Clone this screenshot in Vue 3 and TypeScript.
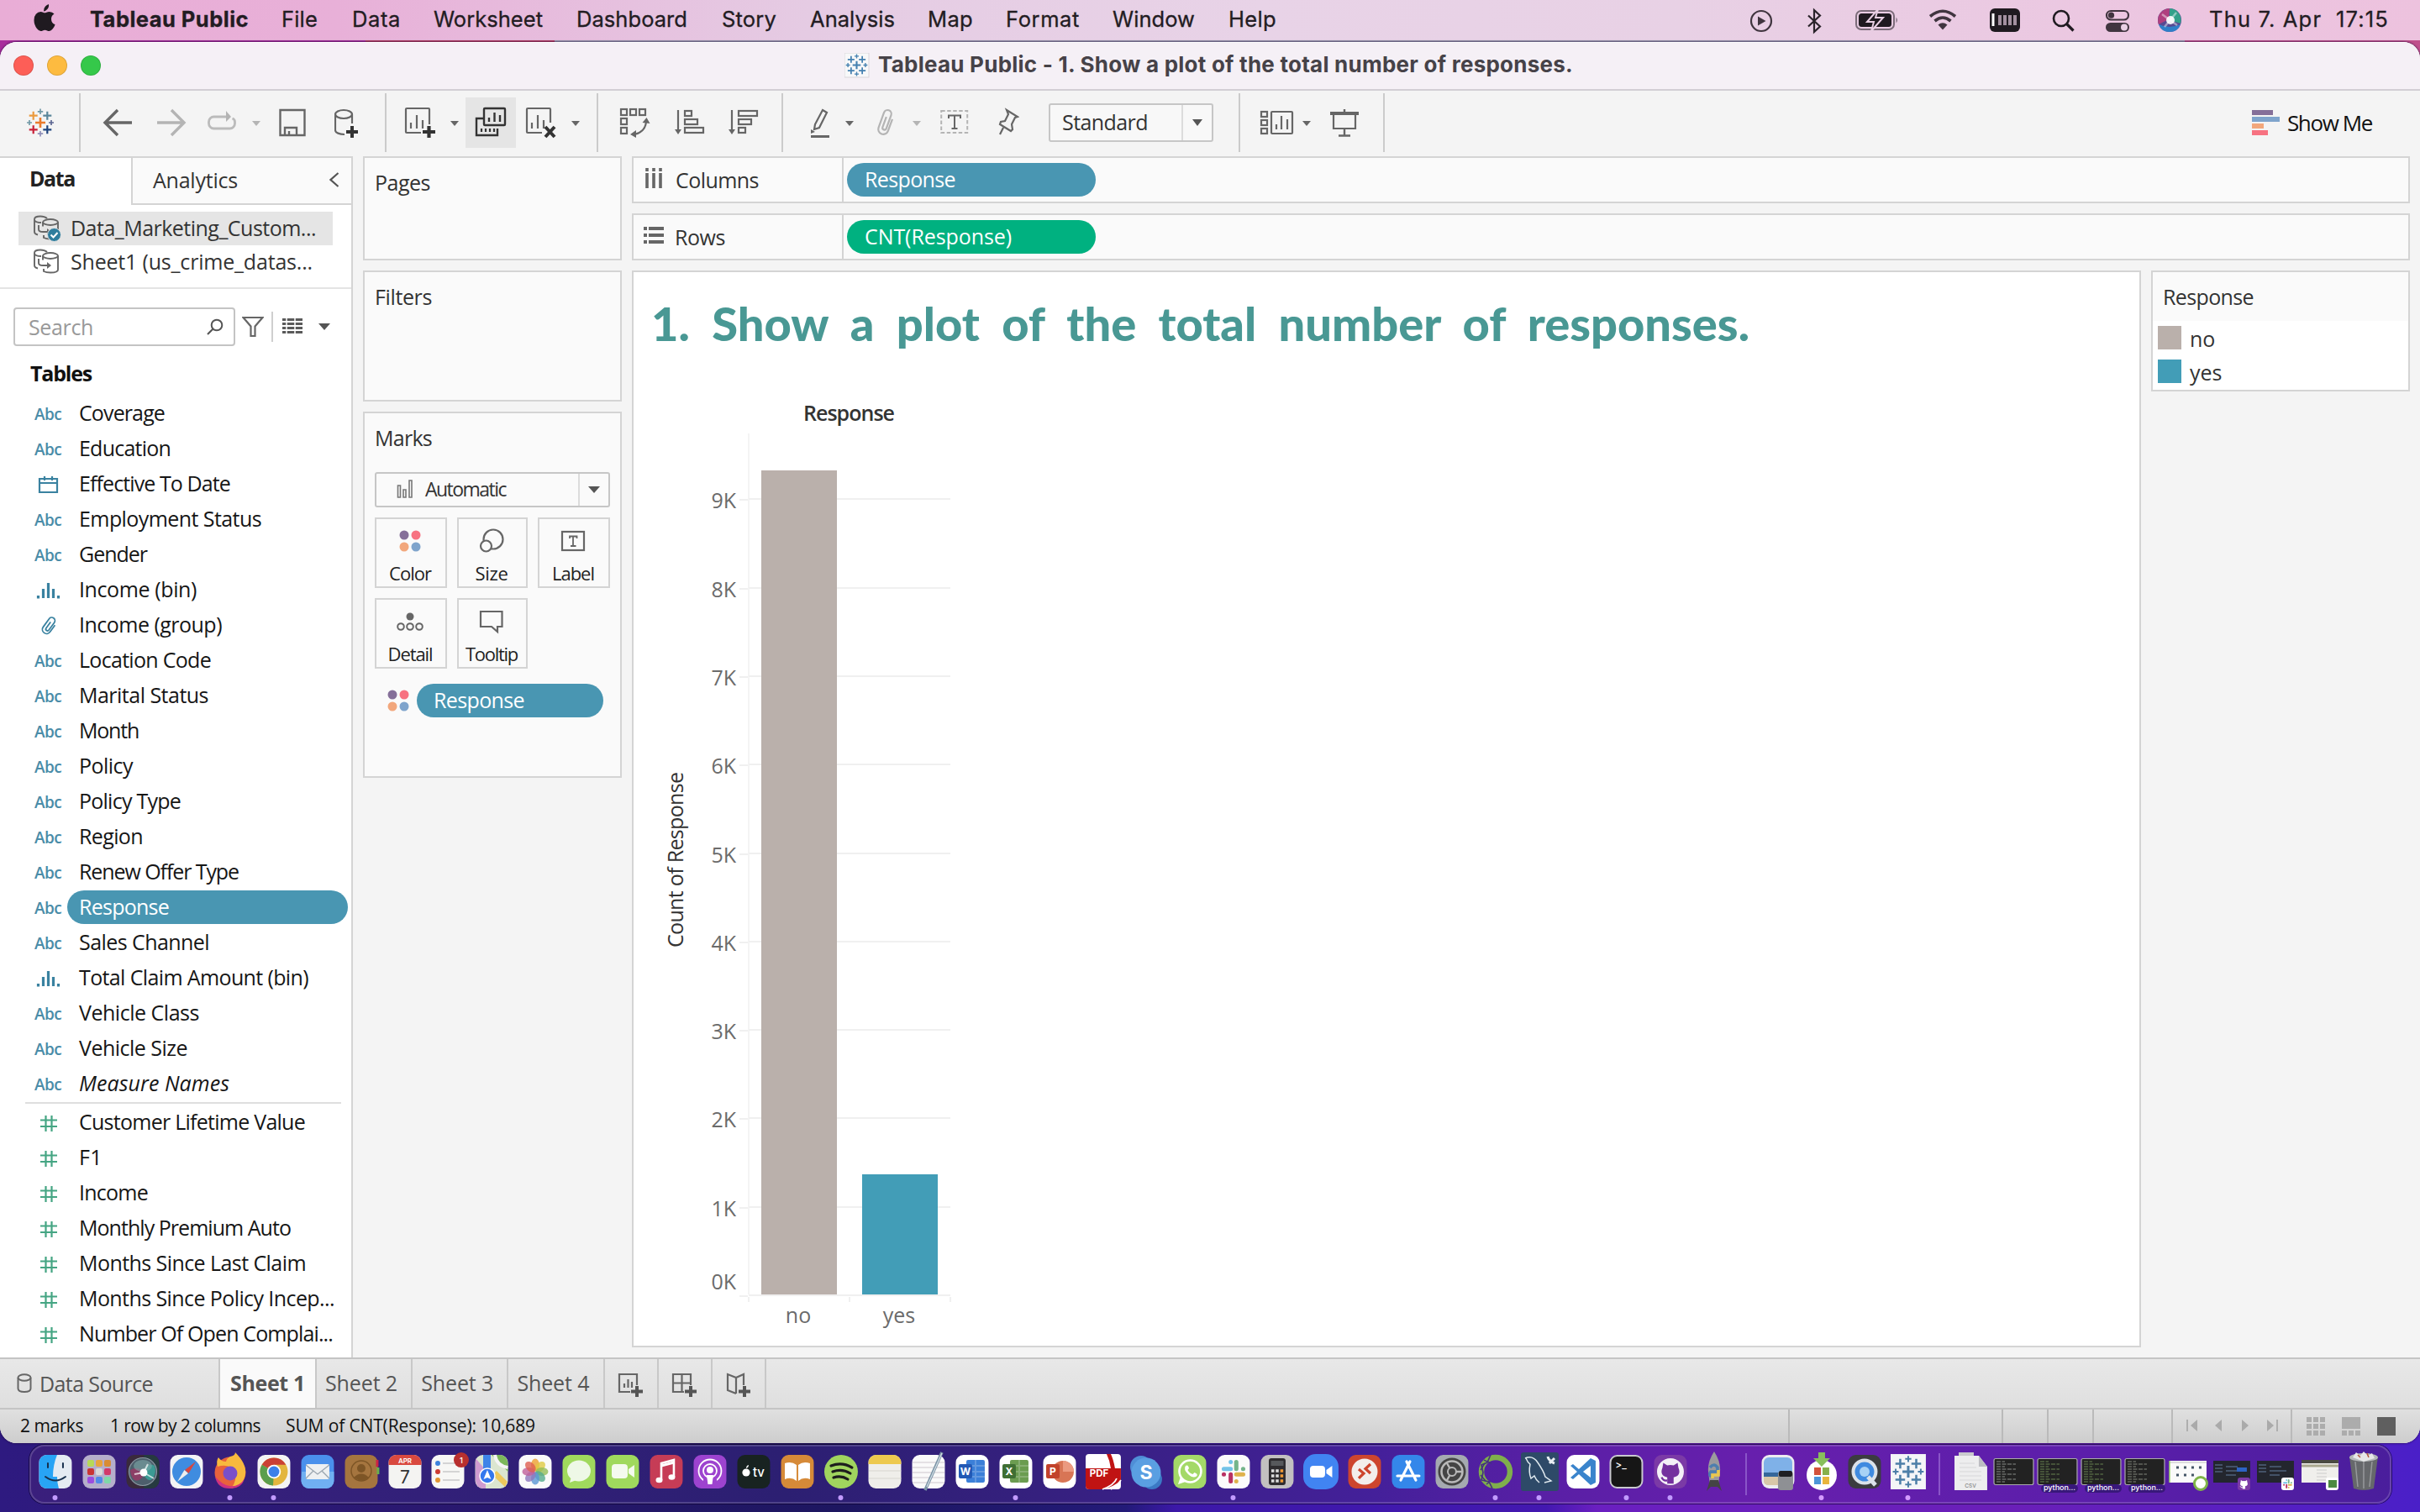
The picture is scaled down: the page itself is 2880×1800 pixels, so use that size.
<script setup lang="ts">
import type { Directive } from 'vue'

interface Field { name: string; kind: string; w: number; italic?: boolean }
interface Tool { x: number; w: number; svg?: string; sep?: boolean; active?: boolean; select?: boolean }
interface Menu { label: string; x: number; w: number }
interface App { svg: string; run?: boolean }

/* Tracks a label so that its advance equals the measured design width. */
const vFit: Directive<HTMLElement, number> = {
  mounted(el, binding) {
    const count = (el.textContent ?? '').length
    const natural = el.getBoundingClientRect().width
    if (count > 1 && binding.value) {
      el.style.letterSpacing = `${((binding.value + 2 - natural) / count).toFixed(3)}px`
    }
  },
}

const menus: Menu[] = [
  { label: 'Tableau Public', x: 107, w: 187 },
  { label: 'File', x: 335, w: 41 },
  { label: 'Data', x: 419, w: 56 },
  { label: 'Worksheet', x: 516, w: 128 },
  { label: 'Dashboard', x: 686, w: 130 },
  { label: 'Story', x: 859, w: 63 },
  { label: 'Analysis', x: 964, w: 99 },
  { label: 'Map', x: 1104, w: 52 },
  { label: 'Format', x: 1197, w: 86 },
  { label: 'Window', x: 1324, w: 96 },
  { label: 'Help', x: 1462, w: 55 },
]
const menuWidth = (i: number) => (i + 1 < menus.length ? menus[i + 1].x : 1560) - menus[i].x

const plus = (x: number, y: number, r: number, c: string, s: number) =>
  `<path d="M${x - r} ${y}h${2 * r}M${x} ${y - r}v${2 * r}" stroke="${c}" stroke-width="${s}" fill="none"/>`
const logo = (cx: number, cy: number, k: number, cs: string[]) =>
  plus(cx, cy, 6 * k, cs[0], 2.6 * k) +
  plus(cx - 8.3 * k, cy - 8.3 * k, 5 * k, cs[1], 2.2 * k) + plus(cx + 8.3 * k, cy - 8.3 * k, 5 * k, cs[2], 2.2 * k) +
  plus(cx - 8.3 * k, cy + 8.3 * k, 5 * k, cs[3], 2.2 * k) + plus(cx + 8.3 * k, cy + 8.3 * k, 5 * k, cs[4], 2.2 * k) +
  plus(cx, cy - 13.2 * k, 3.2 * k, cs[5], 1.7 * k) + plus(cx - 13 * k, cy, 3 * k, cs[6], 1.7 * k) +
  plus(cx + 13 * k, cy, 3 * k, cs[7], 1.7 * k) + plus(cx, cy + 13.2 * k, 3.2 * k, cs[8], 1.7 * k)
const mono = (c: string) => Array(9).fill(c) as string[]

const G = '#666'
const caret = (c = '#666') => `<path d="M0 18h10l-5 6z" fill="${c}"/>`
const bars = (x: number, y: number, c = G) =>
  `<path d="M${x} ${y}v-7M${x + 7} ${y}v-16M${x + 14} ${y}v-10" stroke="${c}" stroke-width="2.2" fill="none"/>`

const tools: Tool[] = [
  { x: 32, w: 32, svg: logo(16, 20, 1, ['#eb7b2d', '#eb9a3d', '#5b879b', '#c72037', '#1f447e', '#7199a6', '#7199a6', '#5c6692', '#8f8fb8']) },
  { x: 94, w: 2, sep: true },
  { x: 122, w: 36, svg: `<path d="M18 5 3 20l15 15M3 20h32" fill="none" stroke="${G}" stroke-width="3.4"/>` },
  { x: 186, w: 36, svg: '<path d="M18 5l15 15-15 15M1 20h32" fill="none" stroke="#b4b4b4" stroke-width="3.4"/>' },
  { x: 246, w: 36, svg: '<path d="M24 13H8.500a6 6 0 0 0-6 6v2a6 6 0 0 0 6 6h19a6 6 0 0 0 6-6v-2q0-3-3-4" fill="none" stroke="#bbb" stroke-width="2.800"/><path d="M23 6v13l6-6z" fill="#b4b4b4"/>' },
  { x: 300, w: 10, svg: caret('#b4b4b4') },
  { x: 332, w: 32, svg: `<path d="M1.500 5h29v30h-29zM7 35v-9h14v9M12 35v-5" fill="none" stroke="${G}" stroke-width="2.400"/>` },
  { x: 398, w: 30, svg: `<ellipse cx="11" cy="10" rx="10" ry="5" fill="none" stroke="${G}" stroke-width="2.200"/><path d="M1 10v19c0 3 5 5 11 5M21 10v11" fill="none" stroke="${G}" stroke-width="2.200"/><path d="M14 31h14M21 24v14" stroke="#333" stroke-width="4"/>` },
  { x: 458, w: 2, sep: true },
  { x: 481, w: 37, svg: `<path d="M20 32H3a1 1 0 0 1-1-1V4a1 1 0 0 1 1-1h26a1 1 0 0 1 1 1v18" fill="none" stroke="${G}" stroke-width="2.200"/>${bars(8, 27)}<path d="M22 31h15M29.500 24v14" stroke="#333" stroke-width="4.200"/>` },
  { x: 536, w: 10, svg: caret() },
  { x: 554, w: 60, active: true, svg: '<rect x="22" y="3" width="25" height="20" fill="none" stroke="#333" stroke-width="2.400" rx="1"/><path d="M28 19v-5M34.500 19V8M41 19v-8M22 15h-9v20h25v-8" fill="none" stroke="#333" stroke-width="2.400"/><path d="M19 27v4M24 27v4M29 27v4M34 27v4" stroke="#333" stroke-width="2.200"/>' },
  { x: 625, w: 37, svg: `<path d="M20 32H3a1 1 0 0 1-1-1V4a1 1 0 0 1 1-1h26a1 1 0 0 1 1 1v16" fill="none" stroke="${G}" stroke-width="2.200"/>${bars(8, 27)}<path d="M24 25l11 12M35 25L24 37" stroke="#333" stroke-width="4"/>` },
  { x: 680, w: 10, svg: caret() },
  { x: 710, w: 2, sep: true },
  { x: 737, w: 37, svg: `<g fill="none" stroke="${G}" stroke-width="2.200"><rect x="2" y="4" width="7" height="7"/><rect x="13" y="4" width="7" height="7"/><rect x="24" y="4" width="7" height="7"/><rect x="2" y="15" width="7" height="7"/><rect x="2" y="26" width="7" height="7"/><path d="M32 19q-1 12-14 15"/></g><path d="M27.500 20l5-6 4 7zM20 29l-7 5 7 4z" fill="${G}"/>` },
  { x: 802, w: 37, svg: `<g fill="none" stroke="${G}" stroke-width="2.200"><path d="M5 5v24"/><rect x="13" y="6" width="8" height="6"/><rect x="13" y="16" width="15" height="6"/><rect x="13" y="26" width="22" height="6"/></g><path d="M1 28h8l-4 6z" fill="${G}"/>` },
  { x: 866, w: 37, svg: `<g fill="none" stroke="${G}" stroke-width="2.200"><path d="M5 5v24"/><rect x="13" y="6" width="22" height="6"/><rect x="13" y="16" width="15" height="6"/><rect x="13" y="26" width="8" height="6"/></g><path d="M1 28h8l-4 6z" fill="${G}"/>` },
  { x: 930, w: 2, sep: true },
  { x: 963, w: 26, svg: `<path d="M16 5l5 3-9 18-6 2 1-6z" fill="none" stroke="${G}" stroke-width="2.200"/><path d="M2 28l5 3-5 2z" fill="${G}"/><path d="M2 36.500h22" stroke="${G}" stroke-width="3.200"/>` },
  { x: 1006, w: 10, svg: caret() },
  { x: 1040, w: 26, svg: '<path d="M20 13v15a6 6 0 0 1-12 0V9a4.500 4.500 0 0 1 9 0v17a2.300 2.300 0 0 1-4.600 0V13" transform="rotate(20 13 20)" fill="none" stroke="#b4b4b4" stroke-width="2.200"/>' },
  { x: 1086, w: 10, svg: caret('#b4b4b4') },
  { x: 1119, w: 34, svg: `<rect x="1.200" y="6" width="31" height="26" fill="none" stroke="#b4b4b4" stroke-width="2" stroke-dasharray="4.500 2.500"/><path d="M10 15v-3.500h14V15M17 11.500v15M13.500 27h7" fill="none" stroke="${G}" stroke-width="2"/>` },
  { x: 1186, w: 27, svg: `<path d="M12 5l13 8-3 1-4 8 1 6-2 2-13-8 1-3 5-1 4-8zM8 26l-4 8" fill="none" stroke="${G}" stroke-width="2.200"/>` },
  { x: 1248, w: 196, select: true },
  { x: 1474, w: 2, sep: true },
  { x: 1499, w: 41, svg: `<g fill="none" stroke="${G}" stroke-width="2.200"><rect x="2" y="7" width="7" height="6"/><rect x="2" y="17" width="7" height="6"/><rect x="2" y="27" width="7" height="6"/><rect x="14" y="7" width="25" height="26" rx="1"/><path d="M20 28v-6M26 28V12M33 28V16"/></g>` },
  { x: 1550, w: 10, svg: caret() },
  { x: 1583, w: 34, svg: `<path d="M17 4v4M17 27v8M10 35.500h14" stroke="${G}" stroke-width="2.400"/><path d="M0 9h34" stroke="${G}" stroke-width="4"/><path d="M4 10v17h26V10" fill="none" stroke="${G}" stroke-width="2.200"/>` },
  { x: 1646, w: 2, sep: true },
]
const toolGap = (i: number) => tools[i].x - (i ? tools[i - 1].x + tools[i - 1].w : 0)

const dims: Field[] = [
  { name: 'Coverage', kind: 'abc', w: 100 },
  { name: 'Education', kind: 'abc', w: 107 },
  { name: 'Effective To Date', kind: 'date', w: 178 },
  { name: 'Employment Status', kind: 'abc', w: 215 },
  { name: 'Gender', kind: 'abc', w: 79 },
  { name: 'Income (bin)', kind: 'bin', w: 138 },
  { name: 'Income (group)', kind: 'group', w: 168 },
  { name: 'Location Code', kind: 'abc', w: 155 },
  { name: 'Marital Status', kind: 'abc', w: 152 },
  { name: 'Month', kind: 'abc', w: 69 },
  { name: 'Policy', kind: 'abc', w: 62 },
  { name: 'Policy Type', kind: 'abc', w: 119 },
  { name: 'Region', kind: 'abc', w: 74 },
  { name: 'Renew Offer Type', kind: 'abc', w: 188 },
  { name: 'Response', kind: 'abc', w: 105 },
  { name: 'Sales Channel', kind: 'abc', w: 153 },
  { name: 'Total Claim Amount (bin)', kind: 'bin', w: 271 },
  { name: 'Vehicle Class', kind: 'abc', w: 141 },
  { name: 'Vehicle Size', kind: 'abc', w: 127 },
  { name: 'Measure Names', kind: 'abc', w: 177, italic: true },
]
const measures: Field[] = [
  { name: 'Customer Lifetime Value', kind: 'num', w: 267 },
  { name: 'F1', kind: 'num', w: 26 },
  { name: 'Income', kind: 'num', w: 80 },
  { name: 'Monthly Premium Auto', kind: 'num', w: 250 },
  { name: 'Months Since Last Claim', kind: 'num', w: 268 },
  { name: 'Months Since Policy Incep...', kind: 'num', w: 302 },
  { name: 'Number Of Open Complai...', kind: 'num', w: 300 },
]

const B = '#3a82a0'
const kindIcons: Record<string, string> = {
  date: `<path d="M5 7h21v16H5zM5 12h21M11 4v5M20 4v5" fill="none" stroke="${B}" stroke-width="2.200"/>`,
  bin: `<path d="M3.500 20v3.600M9.500 12v11M15.500 5v18M21.500 12v11M27.500 20v3.600" stroke="${B}" stroke-width="3.200" fill="none"/>`,
  group: `<path d="M21.500 9v10a5 5 0 0 1-10 0V7a3.800 3.800 0 0 1 7.600 0v11a2 2 0 0 1-4 0V9" transform="rotate(36 16 14)" fill="none" stroke="${B}" stroke-width="1.800"/>`,
  num: '<path d="M6 10.500h20M6 18h20M12.500 5v19M19.500 5v19" fill="none" stroke="#45a583" stroke-width="2.200"/>',
}

const cards = [
  { label: 'Color', w: 48, icon: '<circle cx="9" cy="10" r="5.500" fill="#856f99"/><circle cx="23" cy="10" r="5.500" fill="#f77281"/><circle cx="9" cy="24" r="5.500" fill="#f2a77c"/><circle cx="23" cy="24" r="5.500" fill="#7fa4cc"/>' },
  { label: 'Size', w: 37, icon: `<circle cx="18" cy="15" r="11.500" fill="none" stroke="${G}" stroke-width="2.200"/><circle cx="9.500" cy="23" r="6.500" fill="#fafafa" stroke="${G}" stroke-width="2.200"/>` },
  { label: 'Label', w: 48, icon: `<rect x="3" y="6" width="26" height="22" fill="none" stroke="${G}" stroke-width="2.200"/><path d="M12 14v-2.500h8.500V14M16 12v10.500M13 23h6.500" fill="none" stroke="${G}" stroke-width="1.800"/>` },
  { label: 'Detail', w: 51, icon: `<circle cx="16" cy="11" r="4.500" fill="${G}"/><g fill="none" stroke="${G}" stroke-width="2"><circle cx="5" cy="23" r="3.800"/><circle cx="16" cy="23" r="3.800"/><circle cx="27" cy="23" r="3.800"/></g>` },
  { label: 'Tooltip', w: 60, icon: `<path d="M3 5h25.500v18H23v6l-7-6H3z" fill="none" stroke="${G}" stroke-width="2.200"/>` },
]
const dots = cards[0].icon

const ticks = [0, 1, 2, 3, 4, 5, 6, 7, 8, 9].map((n) => ({
  label: `${n}K`,
  y: Math.round(1542 - n * 105.3),
  base: n === 0 ? 1535 : Math.round(1542 - n * 105.3) + 11,
}))

const tabs = [
  { label: 'Sheet 2', w: 84 },
  { label: 'Sheet 3', w: 84 },
  { label: 'Sheet 4', w: 84 },
]
const P = '<path d="M16 26.500h14M23 20v13" stroke="#555" stroke-width="4"/>'
const newTabs = [
  `<path d="M15 27H2V6h21v13M8 22v-5M12.500 22V12M17 22v-7" fill="none" stroke="${G}" stroke-width="2.200"/>${P}`,
  `<path d="M15 27H2V6h21v13M2 16.500h21M12.500 6v21" fill="none" stroke="${G}" stroke-width="2.200"/>${P}`,
  `<path d="M13 29L3 25V6l10 4 9-4v13M13 10v19" fill="none" stroke="${G}" stroke-width="2.200"/>${P}`,
]

/* Dock icons are drawn on a 52 x 70 canvas. */
const tile = (bg: string, body = '') => `<rect x="6.500" y="12" width="39" height="40" rx="9" fill="${bg}"/>${body}`
const txt = (x: number, y: number, s: number, c: string, t: string, w = 700) =>
  `<text x="${x}" y="${y}" font-family="Inter, sans-serif" font-size="${s}" font-weight="${w}" fill="${c}" text-anchor="middle">${t}</text>`
const code = (c: string) => {
  let d = ''
  for (let i = 0; i < 9; i++) d += `M5 ${20 + i * 3}h${10 + ((i * 13) % 26)}`
  return `<rect x="2" y="16.500" width="47" height="31" rx="2" fill="#222" stroke="#aaa" stroke-width="1.200"/><path d="${d}" stroke="${c}" stroke-width="1" stroke-dasharray="5 1.500"/>`
}
const pyLabel = `<rect x="6" y="47" width="44" height="10" rx="5" fill="#38187a"/>${txt(28, 54.5, 9, '#fff', 'python...', 500)}`
const office = (c: string, d: string, t: string) =>
  tile('#fff', `<rect x="19" y="18" width="22" height="27" rx="2" fill="${c}"/><path d="M19 25h22M19 32h22M19 38h22M30 18v27" stroke="#fff" stroke-opacity=".2" stroke-width="2"/><rect x="10" y="23" width="16" height="17" rx="2" fill="${d}"/>${txt(18, 36, 12, '#fff', t)}`)
const slack = (x: number, y: number, k: number) =>
  `<g transform="translate(${x} ${y}) scale(${k})" stroke-width="4.600" stroke-linecap="round" fill="none"><path d="M-3-10.500v.1M-10.500-3h7.500" stroke="#72c3e8"/><path d="M3-10.500v7.500M10.500-3h-.1" stroke="#74b58a"/><path d="M3 3h7.500M3 10.500v-.1" stroke="#dfb24c"/><path d="M-3 3v7.500M-10.500 3h.1" stroke="#b83264"/></g>`
const cat = (x: number, y: number, k: number, c: string) =>
  `<g transform="translate(${x} ${y}) scale(${k})"><path d="M-9-11l5 3q4-1 8 0l5-3 1 6q4 10-6 12v8h-8v-8q-10-2-6-12z" fill="${c}"/><path d="M-4 11q-5 1-7-4" fill="none" stroke="${c}" stroke-width="2.500"/></g>`
const petals = ['#eda02f', '#e0cb45', '#93bd57', '#55ab8d', '#5b97d4', '#8d78bd', '#c0609a', '#df5f50']
  .map((c, i) => `<ellipse cx="26" cy="24" rx="5" ry="7.500" fill="${c}" fill-opacity=".8" transform="rotate(${i * 45} 26 32)"/>`)
  .join('')
const pads = ['#b6d957', '#e8a33c', '#d98c35', '#c93434', '#d8d8d8', '#d2386a', '#9b4ddf', '#5089e8', '#7fd8a8']
  .map((c, i) => `<rect x="${12 + (i % 3) * 10}" y="${18 + Math.floor(i / 3) * 10}" width="8" height="8" rx="2" fill="${c}"/>`)
  .join('')

const dockMain: App[] = [
  { run: true, svg: '<rect x="6.500" y="12" width="39" height="40" rx="9" fill="#e4ebf2"/><path d="M28 12H15.500a9 9 0 0 0-9 9v22a9 9 0 0 0 9 9H30q-2-7-2-14h-5q0-14 5-26z" fill="#28a4f5"/><path d="M17 22v5M35 22v5M14 38q12 9 24 0" stroke="#17304d" stroke-width="2" fill="none" stroke-linecap="round"/>' },
  { svg: tile('#b5aecb', pads) },
  { svg: tile('#3a2a3c', '<path d="M27 12h9.500a9 9 0 0 1 9 9v22a9 9 0 0 1-9 9H27z" fill="#263a40"/><circle cx="26" cy="32" r="16.500" fill="#4d5f6c" stroke="#8b98a3" stroke-width="1.200"/><path d="M11 30q9-5 17 3-4 12-12 9-5-5-5-12z" fill="#8c3f66"/><path d="M26 33q5-13 14-8 3 9-3 16-6 4-11-8z" fill="#3b9a93"/><ellipse cx="26" cy="25" rx="11" ry="7" fill="#7fa9a9" fill-opacity=".6"/><circle cx="27" cy="33" r="4.500" fill="#fff"/><path d="M27 33l12 7M27 33l-11 2M27 33l5-10" stroke="#fff" stroke-opacity=".7" stroke-width="2"/>') },
  { svg: tile('#f3f3f5', '<circle cx="26" cy="32" r="17" fill="#3f8ce0"/><path d="M37 20L28.500 34 24 30z" fill="#d8463f"/><path d="M15 44l8.500-14 4.500 4z" fill="#eee"/>') },
  { run: true, svg: '<circle cx="26" cy="33" r="18.500" fill="#e8623c"/><path d="M26 14q6-1 6-5 14 14 12 26-2 14-17 17 8-10 4-20-6-10-20-6-2-7 1-11 3 5 9 5 1-4 5-6z" fill="#f8b93e"/><circle cx="26" cy="34" r="8.500" fill="#7a4fc9"/><path d="M8 38q3 15 19 14 12 0 16-11-8 10-18 8-8-1-17-11z" fill="#cf3280"/>' },
  { run: true, svg: tile('#f4f4f4', '<circle cx="26" cy="32" r="16.500" fill="#e3b63e"/><path d="M26 32L11.700 23.700A16.500 16.500 0 0 1 40.300 23.700H26z" fill="#ca4034"/><path d="M26 32l-14.300-8.300A16.500 16.500 0 0 0 25 48.500z" fill="#5b9e4d"/><circle cx="26" cy="32" r="8.300" fill="#fff"/><circle cx="26" cy="32" r="6.500" fill="#3b80e8"/>') },
  { svg: tile('#4a90ec', '<path d="M7 32h38.500v11a9 9 0 0 1-9 9H15.500a9 9 0 0 1-9-9z" fill="#70b0f2"/><rect x="12" y="23" width="28" height="18" rx="2" fill="#eef0f2"/><path d="M12 24l14 11 14-11M12 40l9-9M40 40l-9-9" fill="none" stroke="#9aa5b0" stroke-width="1.300"/>') },
  { svg: tile('#a5753f', '<path d="M45 18v8" stroke="#c24" stroke-width="3"/><path d="M46 27v8" stroke="#6ab04c" stroke-width="3"/><circle cx="26" cy="31" r="12" fill="none" stroke="#7d5526" stroke-width="1.500"/><circle cx="26" cy="28" r="5" fill="#7d5526"/><path d="M17 39q9-9 18 0-8 7-18 0z" fill="#7d5526"/>') },
  { svg: tile('#f4f4f2', `<path d="M6.500 24v-3a9 9 0 0 1 9-9h21a9 9 0 0 1 9 9v3z" fill="#d9493f"/>${txt(26, 21.500, 8, '#fff', 'APR', 600)}${txt(26, 46, 21, '#333', '7', 400)}`) },
  { svg: tile('#f7f7f5', `<path d="M20 22h17M20 32h20M20 42h20" stroke="#c9c9c9" stroke-width="1.500"/><circle cx="14" cy="22" r="3" fill="#3d83dd"/><circle cx="14" cy="32" r="3" fill="#cc3b33"/><circle cx="14" cy="42" r="3" fill="#e29331"/><circle cx="42" cy="18" r="9" fill="#b8302f"/>${txt(42, 21.500, 9.500, '#fff', '1', 500)}`) },
  { svg: tile('#dbe6d0', '<path d="M7 16l12 14v22h-3a9 9 0 0 1-9-9z" fill="#cf9bd0"/><path d="M16 12h9v19h-9z" fill="#3e84e8"/><path d="M26 12l19.500 20v-10a10 10 0 0 0-9-10z" fill="#7cb85b"/><path d="M27 36l15 14 3-6-13-13z" fill="#eec85c"/><path d="M30 12q2 13 15.500 15" fill="none" stroke="#f5f5f5" stroke-width="4"/><circle cx="21" cy="37" r="9" fill="#3478ee" stroke="#fff" stroke-width="1.500"/><path d="M21 30l4.500 11-4.500-2-4.500 2z" fill="#fff"/>') },
  { svg: tile('#fafafa', petals) },
  { svg: tile('#a0d95d', '<ellipse cx="26" cy="31" rx="14" ry="12.500" fill="#eef8e6"/><path d="M17 38l-2 7 8-3z" fill="#eef8e6"/>') },
  { svg: tile('#a0d95d', '<rect x="13" y="23" width="19" height="17" rx="4" fill="#f4faee"/><path d="M33 29l7-5v15l-7-5z" fill="#f4faee"/>') },
  { svg: tile('#c63c56', '<path d="M20 42V22l15-4v20" fill="none" stroke="#fff" stroke-width="2.600"/><path d="M20 25l15-4" stroke="#fff" stroke-width="3"/><ellipse cx="17.500" cy="42" rx="4" ry="3.200" fill="#fff"/><ellipse cx="32.500" cy="38.500" rx="4" ry="3.200" fill="#fff"/>') },
  { svg: tile('#9d43cf', '<circle cx="26" cy="31" r="13.500" fill="none" stroke="#fff" stroke-width="1.800"/><circle cx="26" cy="31" r="8" fill="none" stroke="#fff" stroke-width="1.800"/><path d="M18 50h16v-9H18z" fill="#9d43cf"/><circle cx="26" cy="30" r="4" fill="#fff"/><path d="M22 36h8l-1.500 11h-5z" fill="#fff"/>') },
  { svg: tile('#182321', `<circle cx="17" cy="33" r="4.600" fill="#fff"/><path d="M17 28q0-3 3-4 0 3-3 4z" fill="#fff"/>${txt(32, 38, 15, '#fff', 'tv', 500)}`) },
  { svg: tile('#d68a38', '<path d="M11 22q8-3 14 2v19q-6-5-14-2zM41 22q-8-3-14 2v19q6-5 14-2z" fill="#fff"/>') },
  { run: true, svg: '<circle cx="26" cy="32" r="20" fill="#a0d45e"/><path d="M14 25q13-5 25 2M16 32q11-4 21 2M17 39q9-3 17 2" fill="none" stroke="#1d1d1d" stroke-width="3.200" stroke-linecap="round"/>' },
  { svg: tile('#efeeea', '<path d="M6.500 23v-2a9 9 0 0 1 9-9h21a9 9 0 0 1 9 9v2z" fill="#edc94e"/><path d="M7 31h38.500M7 40h38.500" stroke="#d8d6d0"/>') },
  { svg: tile('#fafafa', '<path d="M7 21h38M7 27h38M7 33h38M7 39h38M7 45h38" stroke="#cfc8cf"/><path d="M42 9L22 54" stroke="#7a93a5" stroke-width="3.600"/><path d="M42 10L24 50" stroke="#d5e0e7" stroke-width="1.200"/>') },
  { svg: office('#3b7fd8', '#2259b5', 'W') },
  { run: true, svg: office('#6b9c50', '#3f6f34', 'X') },
  { svg: tile('#fff', `<circle cx="30" cy="32" r="13" fill="#d87555"/><path d="M30 19v13h13a13 13 0 0 0-13-13z" fill="#eb9a80"/><rect x="10" y="23" width="16" height="17" rx="2" fill="#c2422a"/>${txt(18, 36, 12, '#fff', 'P')}`) },
  { svg: `<rect x="5" y="11" width="42" height="42" rx="4" fill="#fff"/><path d="M30 11q4 8 5 17h5q-2-11-5-17z" fill="#c01313"/><path d="M5 28h42v14q-8 8-22 11H9a4 4 0 0 1-4-4z" fill="#c01313"/><path d="M42 40q-3 8-17 13M47 42q-5 8-12 11" fill="none" stroke="#fff" stroke-width="1.800"/>${txt(21, 38, 11.500, '#fff', 'PDF')}` },
  { svg: `<circle cx="20" cy="26" r="13" fill="#4f8ed6"/><circle cx="33" cy="41" r="12" fill="#3b79c5"/><circle cx="26" cy="33" r="17.500" fill="#5a9fe2"/>${txt(26, 41, 23, '#fff', 'S')}` },
  { svg: tile('#a4d968', '<circle cx="26.500" cy="31.500" r="13" fill="none" stroke="#fff" stroke-width="2.600"/><path d="M12 47l3-9 6 6z" fill="#fff"/><path d="M21 25q3-2 4 3l-1.500 2q2 4 6 5l2-2q5 2 2.500 4.500-4 3-10-2.500t-3-10z" fill="#fff"/>') },
  { run: true, svg: tile('#fbfbfb', slack(26, 32, 1.1)) },
  { svg: tile('#c2c0c0', '<rect x="16" y="16" width="20" height="32" rx="3" fill="#2f2d30"/><rect x="18.500" y="19" width="15" height="6" fill="#57595c"/><path d="M19 31h3.500M24.300 31h3.500M19 37h3.500M24.300 37h3.500M19 43h3.500M24.300 43h3.500" stroke="#ddd" stroke-width="3.500"/><path d="M29.700 31h3.500M29.700 37h3.500M29.700 43h3.500" stroke="#f09a37" stroke-width="3.500"/>') },
  { svg: '<rect x="5" y="11" width="42" height="42" rx="15" fill="#4184f2"/><rect x="13" y="25" width="18" height="14" rx="4" fill="#fff"/><path d="M32.500 30l7-5v14l-7-5z" fill="#fff"/>' },
  { svg: tile('#cd452e', '<circle cx="26" cy="32" r="15.500" fill="#f3eeec"/><path d="M19 29l6 5-6 6M33 23l-6 5.500 6 5.500" fill="none" stroke="#cd452e" stroke-width="3.200"/>') },
  { svg: tile('#3487ea', '<path d="M28 20L17 42M24 20l11 22M13 37h17M34 37h5" fill="none" stroke="#fff" stroke-width="3.200" stroke-linecap="round"/>') },
  { svg: tile('#a5aab0', '<circle cx="26" cy="32" r="16.500" fill="#444"/><circle cx="26" cy="32" r="12.500" fill="none" stroke="#b9b9b9" stroke-width="2.600"/><circle cx="26" cy="32" r="5" fill="none" stroke="#b9b9b9" stroke-width="2"/><path d="M31 32h8M23.500 28l-4-7M23.500 36l-4 7" stroke="#b9b9b9" stroke-width="2.400"/>') },
  { run: true, svg: '<circle cx="26" cy="32" r="17" fill="none" stroke="#7fae4c" stroke-width="6.500"/><path d="M20 12l-4 9-7 3 2 9-2 9 9 2 4 8" fill="none" stroke="#44307f" stroke-width="1.600"/><path d="M12 18l9 4M8 30l5-8M8 36l6 7M15 47l5-4" stroke="#44307f" stroke-width="1.400"/>' },
  { run: true, svg: '<rect x="4" y="9" width="45" height="46" rx="3" fill="#2e4a68"/><path d="M9 16q9-4 15 5 7 10 9 17l7 5-8 2M10 16q2 5 5 7-2 10 1 17l4-3q2 5 6 8" fill="none" stroke="#dfe9ef" stroke-width="1.500"/><path d="M38 22l6-6M36 14q1 5 8 8" stroke="#e8eef2" stroke-width="3" fill="none"/>' },
  { svg: tile('#fff', '<path d="M35 16l6 3v26l-6 3-14-13-7 6-3-2 8-7-8-7 3-2 7 6zM35 25l-9 7 9 7z" fill="#3a84cc" fill-rule="evenodd"/>') },
  { run: true, svg: `<rect x="6.500" y="13" width="38" height="38" rx="8" fill="#161616" stroke="#c9c9cf" stroke-width="2"/>${txt(19, 28, 12, '#fff', '&gt;_', 500)}` },
  { run: true, svg: tile('#7b3aa6', `<circle cx="26" cy="32" r="16" fill="#f4f0f7"/>${cat(26, 32, 0.95, '#74309e')}`) },
  { svg: '<path d="M26 8q8 12 7 24l-2 16H21l-2-16q-1-12 7-24z" fill="#9c9a9d"/><path d="M21 42l-4 13 5-5h8l5 5-4-13z" fill="#444"/><path d="M21 27q5-6 9 0v5h-8q-3 4 1 6" fill="none" stroke="#4d7eae" stroke-width="3.600"/><path d="M31 30v6h-7v4" fill="none" stroke="#eac84f" stroke-width="3.600"/>' },
]
const dockRecent: App[] = [
  { svg: tile('#ececf0', '<rect x="9" y="15" width="34" height="33" rx="6" fill="#7fb1e8"/><path d="M9 33h34v5H9z" fill="#35679b"/><path d="M9 38h34v5q0 5-6 5H15q-6 0-6-5z" fill="#d8c7a8"/><rect x="26" y="32" width="18" height="22" rx="3" fill="#8e9094"/><rect x="27" y="31" width="16" height="7" rx="2" fill="#1f1f22"/>') },
  { run: true, svg: '<ellipse cx="26" cy="36" rx="18" ry="18" fill="#fff"/><path d="M17 27h8v9h-8z" fill="#d3523b"/><path d="M27 27h8v9h-8z" fill="#87b04b"/><path d="M17 38h8v9h-8z" fill="#4c95d8"/><path d="M27 38h8v9h-8z" fill="#e8b53d"/><path d="M22 9h8v7h6L26 26 16 16h6z" fill="#88bf5c"/>' },
  { svg: tile('#3b3c40', '<circle cx="26" cy="32" r="13.500" fill="#3f8ae0" stroke="#dbe2ea" stroke-width="4"/><circle cx="26" cy="32" r="6" fill="#a8d2f5"/><path d="M30 38l9 10" stroke="#dbe2ea" stroke-width="5"/>') },
  { run: true, svg: `<rect x="5" y="11" width="42" height="42" fill="#f4f5f7"/>${logo(26, 32, 1.15, mono('#4d7fa8'))}` },
]
const web = '<rect x="3" y="19" width="44" height="26" fill="#fafafa"/><path d="M3 21h44" stroke="#ddd" stroke-width="2"/><path d="M11 27h3M20 27h3M29 27h3M38 27h3M11 36h3M20 36h3M29 36h3" stroke="#456" stroke-width="3"/><path d="M3 19v26" stroke="#9bd36e" stroke-width="1.500"/>'
const dark = '<rect x="3" y="19" width="44" height="26" fill="#23262e"/><path d="M5 24h9M5 28h9M5 32h9M18 26h14M18 31h20M18 36h12" stroke="#4f617b" stroke-width="1.300"/>'
const dockFiles: App[] = [
  { svg: `<path d="M12 9h18v8h6V53H8V13h4z" fill="#c9c9cd"/><path d="M7 13h29l10 13v28H7z" fill="#ededee"/><path d="M36 13v13h10z" fill="#bdbdc2"/><path d="M13 22h18M13 27h20M13 32h26M13 37h26M13 42h26" stroke="#d8d8da"/>${txt(26, 51, 6.500, '#888', 'CSV', 500)}` },
  { svg: code('#8b8f8b') },
  { svg: code('#688451') + pyLabel },
  { svg: code('#688451') + pyLabel },
  { svg: code('#84887c') + pyLabel },
  { svg: `${web}<circle cx="40" cy="46" r="7.500" fill="#fff" stroke="#7fb548" stroke-width="3"/>` },
  { svg: `${dark}<path d="M31 27h12v5H31z" fill="#2d63c4"/><rect x="32" y="39" width="15" height="15" rx="3" fill="#7b3aa6"/>${cat(39.500, 46.500, 0.4, '#fff')}` },
  { svg: `${dark}<rect x="32" y="39" width="15" height="15" rx="3" fill="#fff"/>${slack(39.500, 46.500, 0.42)}` },
  { svg: '<rect x="4" y="18" width="44" height="27" fill="#f0efec"/><path d="M4 20h44" stroke="#4a4a42" stroke-width="4"/><path d="M4 25h44" stroke="#aaa88f" stroke-width="3"/><path d="M22 30h12M22 34h12M22 38h12M22 42h12" stroke="#ccc"/><rect x="33" y="39" width="15" height="15" rx="3" fill="#fff"/><rect x="36" y="42" width="10" height="9" fill="#4c8a41"/>' },
  { svg: '<path d="M9 14h34l-5 38q-12 4-24 0z" fill="#66686b"/><path d="M16 20l3 30M26 20v32M36 20l-3 30" stroke="#97999c" stroke-width="1.500"/><ellipse cx="26" cy="15" rx="17" ry="5" fill="#b5b8ba"/><path d="M13 15l4-6 5 4 4-5 5 5 5-3 3 6-13 4z" fill="#e6e7e8"/><path d="M19 12l3 3M30 10l2 5" stroke="#b0553a" stroke-width="1.500"/>' },
]
const status = [
  { x: 2602, d: 'M1 0v14', t: 'M13 0v14L5 7z' },
  { x: 2634, d: '', t: 'M10 0v14L2 7z' },
  { x: 2664, d: '', t: 'M4 0v14l8-7z' },
  { x: 2697, d: 'M13 0v14', t: 'M1 0v14l8-7z' },
]
</script>

<template>
  <div class="desktop">
    <header class="menubar">
      <svg class="apple" viewBox="0 0 26 32" width="26" height="32">
        <path d="M18 0q.5 4-2 6.300T12 8.500Q11.700 5 14 2.500 15.800.6 18 0zM24.500 11.500q-3.500 2-3.500 6 0 5 4.600 6.800-1 3-3 5.300Q20.800 32 18.600 32q-1.300 0-2.500-.6t-2.600-.6q-1.600 0-2.700.6-1.200.6-2.300.6-2.300 0-4.600-3Q.5 24.600.5 19q0-4.600 2.300-7.200T8.500 9q1.400 0 2.800.7 1.300.6 2 .6.500 0 2-.6Q17 9 18.600 9q3.800 0 5.900 2.500z" fill="#1f1a20" />
      </svg>
      <nav class="menus">
        <span v-for="(m, i) in menus" :key="m.label" class="menu" :class="{ strong: i === 0 }" :style="{ width: menuWidth(i) + 'px' }"><span v-fit="m.w">{{ m.label }}</span></span>
      </nav>
      <svg class="extras" viewBox="2080 0 520 48" width="520" height="48">
        <circle cx="2096" cy="25" r="12" fill="none" stroke="#40353f" stroke-width="2.200" /><path d="M2092 19.500l9.500 5.500-9.500 5.500z" fill="#40353f" />
        <path d="M2152 18.500l14 13-7 6.500V12l7 6.500-14 13" fill="none" stroke="#2a232a" stroke-width="2.200" />
        <rect x="2209" y="13" width="45" height="22" rx="6" fill="none" stroke="#7c6c7a" stroke-width="2" /><rect x="2212" y="16" width="39" height="16" rx="3.500" fill="#1f1a20" />
        <path d="M2256.500 20.500q3 3.500 0 7z" fill="#7c6c7a" /><path d="M2235 11l-13 15h8l-3 11 14-16h-9l3-10z" fill="#1f1a20" stroke="#e8cfe3" stroke-width="2" />
        <g fill="none" stroke="#40353f" stroke-width="3.600"><path d="M2297 19.500q15-12.500 30 0M2302.500 25q9.500-8 19 0" /></g><path d="M2306.500 29.500q5.500-4.500 11 0l-5.500 6z" fill="#40353f" />
        <rect x="2368" y="10" width="36" height="28" rx="6" fill="#1f1a20" /><path d="M2372 16v15" stroke="#fff" stroke-width="3" /><path d="M2380 18v12M2386 18v12M2392 18v12M2398 18v12" stroke="#a390a0" stroke-width="4" />
        <circle cx="2453" cy="22" r="9" fill="none" stroke="#1f1a20" stroke-width="2.600" /><path d="M2459.500 28.500l8 8" stroke="#1f1a20" stroke-width="3.200" />
        <rect x="2507" y="13" width="26" height="10.500" rx="5.200" fill="none" stroke="#40353f" stroke-width="2.200" /><circle cx="2512.500" cy="18.200" r="3.600" fill="#40353f" />
        <rect x="2506" y="27" width="28" height="11" rx="5.500" fill="#40353f" /><circle cx="2528" cy="32.500" r="4" fill="#e9d0e4" />
        <circle cx="2582" cy="24" r="14" fill="#574a92" /><path d="M2582 10a14 14 0 0 1 13 18l-13-4z" fill="#32a08a" /><path d="M2582 10a14 14 0 0 0-13 19l12-6z" fill="#b0407f" /><path d="M2569 29q13 6 26 0-3 9-13 9t-13-9z" fill="#2f7fc8" /><circle cx="2583" cy="24" r="5" fill="#fff" fill-opacity=".9" /><path d="M2573 17l18 13M2590 15l-14 17" stroke="#fff" stroke-opacity=".45" stroke-width="2.500" />
      </svg>
      <span class="clock"><span v-fit="212">Thu 7. Apr&nbsp;&nbsp;17:15</span></span>
    </header>

    <main class="window">
      <div class="titlebar">
        <i class="light red" /><i class="light yellow" /><i class="light green" />
        <div class="title">
          <svg viewBox="0 0 30 30" width="30" height="30"><rect width="29" height="29" fill="#f7f8f9" stroke="#d9d5da" /><g v-html="logo(14.5, 14.5, 0.8, mono('#4480b0'))" /></svg>
          <span v-fit="825">Tableau Public - 1. Show a plot of the total number of responses.</span>
        </div>
      </div>

      <div class="toolbar">
        <template v-for="(t, i) in tools" :key="t.x">
          <i v-if="t.sep" class="sep" :style="{ marginLeft: toolGap(i) + 'px' }" />
          <div v-else-if="t.select" class="select" :style="{ marginLeft: toolGap(i) + 'px' }">
            <span class="grow"><span v-fit="100">Standard</span></span>
            <span class="drop"><svg viewBox="0 0 12 8" width="12" height="8"><path d="M0 0h12L6 8z" fill="#555" /></svg></span>
          </div>
          <div v-else class="tool" :class="{ active: t.active }" :style="{ marginLeft: toolGap(i) + 'px' }">
            <svg :width="t.w" height="40" :viewBox="`0 0 ${t.w} 40`" v-html="t.svg" />
          </div>
        </template>
        <div class="showme">
          <svg viewBox="0 0 34 30" width="34" height="30"><path d="M0 0h25v6H0z" fill="#856f99" /><path d="M0 8h33v6H0z" fill="#7fa4cc" /><path d="M0 16h14v6H0z" fill="#f2a77c" /><path d="M0 24h19v6H0z" fill="#f77281" /></svg>
          <span v-fit="99">Show Me</span>
        </div>
      </div>

      <div class="work">
        <aside class="side">
          <div class="sidetabs">
            <div class="datatab"><span v-fit="52">Data</span></div>
            <div class="anatab">
              <span v-fit="99">Analytics</span>
              <svg viewBox="0 0 12 18" width="12" height="18"><path d="M10.500 1L1.500 9l9 8" fill="none" stroke="#555" stroke-width="2.200" /></svg>
            </div>
          </div>
          <div class="sources">
            <div v-for="s in [{ n: 'Data_Marketing_Custom...', w: 290 }, { n: 'Sheet1 (us_crime_datas...', w: 286 }]" :key="s.n" class="source" :class="{ on: s.w === 290 }">
              <svg viewBox="0 0 34 34" width="34" height="34">
                <g fill="none" stroke="#666" stroke-width="1.900"><path d="M17 5Q14 2.500 9 2.500 2 2.500 2 6v15q0 2.500 4 3.500M2 7q1 3 8 3M7 13v5q0 3 5 3h6" /><ellipse cx="21" cy="9.500" rx="9" ry="3.500" /><path d="M12 9.500v5M30 9.500V26q0 3.500-9 3.500-5 0-8-1.500v-3" /></g>
                <path d="M17 17l5 4-5 4z" fill="#666" />
                <g v-if="s.w === 290"><circle cx="25.500" cy="24.500" r="8" fill="#2f7d9d" stroke="#e5e5e5" /><path d="M21.500 24.500l3 3 5-5.500" fill="none" stroke="#fff" stroke-width="2" /></g>
              </svg>
              <span v-fit="s.w">{{ s.n }}</span>
            </div>
          </div>
          <div class="find">
            <div class="search">
              <span v-fit="75">Search</span>
              <svg viewBox="0 0 20 20" width="20" height="20"><circle cx="12" cy="8" r="6.300" fill="none" stroke="#555" stroke-width="2" /><path d="M7.500 12.500L1 19" stroke="#555" stroke-width="2.200" /></svg>
            </div>
            <svg class="funnel" viewBox="0 0 26 26" width="26" height="26"><path d="M1.500 2h23l-9 10.500V24h-5V12.500z" fill="none" stroke="#666" stroke-width="2.200" /></svg>
            <i class="bar" />
            <svg class="listicon" viewBox="0 0 24 18" width="24" height="18"><path d="M0 1.500h24M0 6.500h24M0 11.500h24M0 16.500h24" stroke="#5a5a5a" stroke-width="2.800" /><path d="M5 0v18M15 0v18" stroke="#fff" stroke-width="1.500" /></svg>
            <svg class="more" viewBox="0 0 14 9" width="14" height="9"><path d="M0 0h14L7 8z" fill="#555" /></svg>
          </div>
          <div class="tables"><span v-fit="71">Tables</span></div>
          <ul class="fields">
            <li v-for="f in dims" :key="f.name" class="field">
              <span v-if="f.kind === 'abc'" class="abc"><span v-fit="30">Abc</span></span>
              <svg v-else class="kind" viewBox="0 0 32 28" width="32" height="28" v-html="kindIcons[f.kind]" />
              <span class="name" :class="{ italic: f.italic, on: f.name === 'Response' }"><span v-fit="f.w">{{ f.name }}</span></span>
            </li>
          </ul>
          <i class="rule" />
          <ul class="fields lower">
            <li v-for="f in measures" :key="f.name" class="field">
              <svg class="kind" viewBox="0 0 32 28" width="32" height="28" v-html="kindIcons.num" />
              <span class="name"><span v-fit="f.w">{{ f.name }}</span></span>
            </li>
          </ul>
        </aside>

        <section class="cards">
          <div class="card pages"><span v-fit="64">Pages</span></div>
          <div class="card filters"><span v-fit="66">Filters</span></div>
          <div class="card marks">
            <span v-fit="66">Marks</span>
            <div class="marktype">
              <svg viewBox="0 0 20 26" width="20" height="26"><path d="M1.500 10h3v14h-3zM8 15h3v9H8zM15 4h3v20h-3z" fill="none" stroke="#777" stroke-width="1.600" /></svg>
              <span class="grow"><span v-fit="94">Automatic</span></span>
              <span class="drop"><svg viewBox="0 0 14 8" width="14" height="8"><path d="M0 0h14L7 8z" fill="#555" /></svg></span>
            </div>
            <div class="buttons">
              <div v-for="c in cards" :key="c.label" class="btn">
                <svg viewBox="0 0 32 34" width="32" height="34" v-html="c.icon" />
                <span v-fit="c.w">{{ c.label }}</span>
              </div>
            </div>
            <div class="encoding">
              <svg viewBox="2 3 28 28" width="28" height="28" v-html="dots" />
              <div class="pill"><span v-fit="106">Response</span></div>
            </div>
          </div>
        </section>

        <section class="canvas">
          <div class="shelf">
            <div class="shelfname"><svg viewBox="0 0 22 24" width="22" height="24"><path d="M3 0v4M11 0v4M19 0v4M3 6v18M11 6v18M19 6v18" stroke="#666" stroke-width="3.600" /></svg><span v-fit="97">Columns</span></div>
            <div class="pill blue"><span v-fit="106">Response</span></div>
          </div>
          <div class="shelf">
            <div class="shelfname rows"><svg viewBox="0 0 24 20" width="24" height="20"><path d="M0 2h4M0 10h4M0 18h4M6 2h18M6 10h18M6 18h18" stroke="#666" stroke-width="3.800" /></svg><span v-fit="58">Rows</span></div>
            <div class="pill green"><span v-fit="173">CNT(Response)</span></div>
          </div>
          <div class="lower-row">
            <div class="view">
              <h1><span v-fit="1305">1. Show a plot of the total number of responses.</span></h1>
              <svg class="chart" viewBox="754 460 420 1140" width="420" height="1140">
                <text x="956" y="501" class="head" textLength="109">Response</text>
                <path d="M891 516v1025" stroke="#f1f1f1" stroke-width="1.500" />
                <g v-for="t in ticks" :key="t.label">
                  <path :d="`M891 ${t.y}h240M880 ${t.y + 1}h10`" stroke="#f0f0f0" stroke-width="2" />
                  <text x="876" :y="t.base" class="tick" text-anchor="end">{{ t.label }}</text>
                </g>
                <rect x="906" y="560" width="90" height="981" fill="#bab0ab" />
                <rect x="1026" y="1398" width="90" height="143" fill="#429db7" />
                <path d="M891 1544v6M1011 1544v6M1131 1544v6" stroke="#f0f0f0" stroke-width="2" />
                <text x="950" y="1575" class="tick" text-anchor="middle">no</text>
                <text x="1070" y="1575" class="tick" text-anchor="middle">yes</text>
                <text transform="translate(813 1128) rotate(-90)" class="axis" textLength="209">Count of Response</text>
              </svg>
            </div>
            <div class="legend">
              <div class="lhead"><span v-fit="106">Response</span></div>
              <div class="entry"><i class="sw grey" /><span>no</span></div>
              <div class="entry"><i class="sw teal" /><span>yes</span></div>
            </div>
          </div>
        </section>
      </div>

      <footer class="sheets">
        <div class="source-tab">
          <svg viewBox="0 0 18 24" width="18" height="24"><g fill="none" stroke="#666" stroke-width="2"><ellipse cx="9" cy="5" rx="7.500" ry="3.800" /><path d="M1.500 5v13q0 4 7.500 4t7.500-4V5" /></g></svg>
          <span v-fit="133">Data Source</span>
        </div>
        <div class="sheet current"><span v-fit="87">Sheet 1</span></div>
        <div v-for="t in tabs" :key="t.label" class="sheet"><span v-fit="t.w">{{ t.label }}</span></div>
        <div v-for="(n, i) in newTabs" :key="i" class="newtab"><svg viewBox="0 0 32 34" width="32" height="34" v-html="n" /></div>
      </footer>
      <div class="status">
        <span class="s1"><span v-fit="73">2 marks</span></span>
        <span class="s2"><span v-fit="177">1 row by 2 columns</span></span>
        <span class="s3"><span v-fit="295">SUM of CNT(Response): 10,689</span></span>
        <svg class="nav" viewBox="2120 1678 760 40" width="760" height="40">
          <path d="M2129 1678v40M2383 1678v40M2437 1678v40M2491 1678v40M2585 1678v40M2727 1678v40" stroke="#bababa" stroke-width="2" />
          <g v-for="s in status" :key="s.x" :transform="`translate(${s.x} 1690)`"><path :d="s.d" stroke="#aaa" stroke-width="1.800" /><path :d="s.t" fill="#aaa" /></g>
          <path d="M2745 1690h22M2745 1698h22M2745 1706h22" stroke="#acacac" stroke-width="6" stroke-dasharray="6 2" />
          <path d="M2787 1687h22v14h-22z" fill="#acacac" /><path d="M2787 1706h22" stroke="#acacac" stroke-width="6" stroke-dasharray="6 2" />
          <path d="M2829 1687h22v22h-22z" fill="#5f5f5f" />
        </svg>
      </div>
    </main>

    <div class="dock">
      <svg v-for="(a, i) in dockMain" :key="'m' + i" class="app" viewBox="0 0 52 70"><g v-html="a.svg" /><ellipse v-if="a.run" cx="25.500" cy="63" rx="3" ry="3" fill="#c29bff" /></svg>
      <i class="split" />
      <svg v-for="(a, i) in dockRecent" :key="'r' + i" class="app" viewBox="0 0 52 70"><g v-html="a.svg" /><ellipse v-if="a.run" cx="25.500" cy="63" rx="3" ry="3" fill="#d59bff" /></svg>
      <i class="split narrow" />
      <svg v-for="(a, i) in dockFiles" :key="'f' + i" class="app" viewBox="0 0 52 70"><g v-html="a.svg" /></svg>
    </div>
  </div>
</template>

<style>
html, body { background: #2e1a80; overflow: hidden; }
</style>

<style scoped>
* { box-sizing: border-box; }
.desktop {
  width: 2880px; height: 1800px; display: flex; flex-direction: column; overflow: hidden;
  font: 25px/1 "Open Sans", "Noto Sans", sans-serif; color: #333; white-space: nowrap;
  background:
    linear-gradient(90deg, #a82d9c 0 435px, #b83f63 435px 660px, #9c9bb0 660px 2600px, #c0508c 2600px) 0 0 / 2880px 90px no-repeat,
    linear-gradient(90deg, #2e1a80 0, #2a1870 500px, #1d1660 1000px, #231a78 1340px, #3c18a8 1400px, #4318b0 1840px, #6a1fc0 1900px, #6a1fb8 2400px, #4a1fc8 2880px);
}
svg { display: block; flex: none; }
ul { list-style: none; margin: 0; padding: 0; }

.menubar {
  height: 48px; flex: none; display: flex; align-items: center; padding-left: 40px;
  font: 400 25.5px/1 Inter, sans-serif; color: #221c22;
  background: linear-gradient(90deg, #e9add6 0, #e8b0d8 400px, #e5cbe3 960px, #e8d3e7 1500px, #e8d1e5 2000px, #ecc5e0 2600px, #edc2de 2880px);
}
.apple { margin: -6px 41px 0 0; }
.menus { display: flex; width: 1453px; margin-top: -2px; }
.menu { line-height: 30px; -webkit-text-stroke: .3px #221c22; }
.menu.strong { font-weight: 700; }
.extras { margin-left: 520px; }
.clock { margin: -2px 0 0 29px; -webkit-text-stroke: .3px #221c22; }

.window {
  width: 2880px; height: 1668px; margin-top: 2px; flex: none; border-radius: 20px; overflow: hidden;
  display: flex; flex-direction: column; background: #f4f4f4; box-shadow: 0 0 2px 1px rgba(30, 10, 60, .5);
}
.titlebar {
  height: 58px; flex: none; display: flex; align-items: center; background: #f5f0f6; padding: 0 0 2px 16px;
  border-bottom: 2px solid #d2ced4; border-top: 1px solid #fff;
}
.light { width: 24px; height: 24px; border-radius: 50%; margin-right: 16px; flex: none; border: 1px solid rgba(0, 0, 0, .12); }
.red { background: #fd5e57; }
.yellow { background: #fdbb40; }
.green { background: #35c84a; }
.title { margin-left: 869px; display: flex; align-items: center; gap: 10px; font: 700 26px/30px Inter, sans-serif; color: #464248; }
.title span { margin-top: -1px; }

.toolbar { height: 78px; flex: none; display: flex; align-items: center; padding-bottom: 2px; }
.sep { width: 2px; height: 70px; background: #cbcbcb; flex: none; }
.tool { height: 60px; display: flex; align-items: center; flex: none; }
.tool.active { background: #e5e5e5; }
.select {
  width: 196px; height: 46px; border: 2px solid #c6c6c6; border-radius: 3px; display: flex; flex: none;
  align-items: stretch; line-height: 40px; background: #f8f8f8; padding-left: 14px; font-size: 25px;
}
.grow { flex: 1; }
.drop { width: 36px; border-left: 2px solid #dcdcdc; display: flex; align-items: center; justify-content: center; }
.showme { margin-left: 1032px; display: flex; align-items: center; gap: 8px; color: #111; line-height: 30px; font-size: 26px; }

.work { height: 1430px; flex: none; display: flex; }
.side { width: 420px; flex: none; background: #fff; border: solid #d4d4d4; border-width: 2px 2px 0 0; display: flex; flex-direction: column; }
.sidetabs { display: flex; height: 56px; flex: none; }
.datatab { width: 156px; padding-left: 35px; font-weight: 700; color: #222; line-height: 48px; }
.anatab { flex: 1; display: flex; align-items: center; justify-content: space-between; padding: 0 14px 0 24px; background: #fafafa; border: solid #d4d4d4; border-width: 0 0 2px 2px; line-height: 50px; }
.anatab span { margin-top: -3px; }
.anatab svg { margin-top: -2px; }
.sources { height: 100px; flex: none; padding: 8px 22px 0; border-bottom: 2px solid #e4e4e4; }
.source { width: 374px; height: 40px; display: flex; align-items: center; gap: 11px; padding-left: 17px; line-height: 36px; color: #333; }
.source span { margin-top: -2px; }
.source.on { background: #e5e5e5; }
.find { height: 46px; margin-top: 22px; display: flex; align-items: center; padding-left: 16px; flex: none; }
.search { width: 264px; height: 46px; border: 2px solid #c4c4c4; border-radius: 4px; display: flex; justify-content: space-between; align-items: center; padding: 0 12px 0 16px; color: #999; line-height: 36px; }
.funnel { margin-left: 8px; }
.bar { width: 2px; height: 36px; background: #cfcfcf; margin-left: 9px; }
.listicon { margin: -2px 0 0 11px; }
.more { margin-left: 19px; }
.tables { height: 59px; flex: none; padding: 17px 0 0 36px; font: 700 25px/30px "Open Sans", sans-serif; color: #111; }
.fields { flex: none; }
.field { height: 42px; display: flex; align-items: center; color: #161616; }
.abc { width: 38px; margin-left: 41px; font: 600 19px/42px "Open Sans", sans-serif; color: #4a8ca8; padding-top: 2px; margin-right: 1px; }
.kind { margin: 2px 6px 0 42px; }
.name { height: 40px; width: 334px; border-radius: 20px; padding-left: 14px; line-height: 38px; }
.name.italic { font-style: italic; }
.name.on { background: #4996b2; color: #fff; }
.rule { height: 2px; flex: none; margin: 1px 12px 0 30px; background: #dedede; }
.lower { margin-top: 1px; }

.cards { width: 308px; margin-left: 12px; flex: none; display: flex; flex-direction: column; gap: 12px; }
.card { border: 2px solid #d4d4d4; background: #fafafa; padding: 14px 12px 0 12px; line-height: 30px; }
.pages { height: 124px; }
.filters { height: 156px; }
.marks { height: 436px; }
.marktype { display: flex; align-items: stretch; width: 280px; height: 42px; margin: 26px 0 12px 0; border: 2px solid #c6c6c6; border-radius: 3px; font-size: 23px; line-height: 37px; }
.marktype > svg { margin: 4px 14px 0 24px; }
.buttons { display: grid; grid-template-columns: 86px 84px 86px; gap: 12px; width: 280px; }
.btn { height: 84px; border: 2px solid #d4d4d4; display: flex; flex-direction: column; align-items: center; font-size: 22px; line-height: 26px; color: #222; padding: 9px 2px 0 0; }
.btn span { margin-top: 8px; }
.encoding { display: flex; align-items: center; margin: 18px 0 0 13px; }
.encoding svg { margin-left: 1px; }
.encoding .pill { width: 222px; margin-left: 8px; padding-left: 20px; }
.pill { height: 40px; border-radius: 20px; background: #4996b2; color: #fff; line-height: 38px; padding-left: 20px; }

.canvas { width: 2116px; margin-left: 12px; flex: none; display: flex; flex-direction: column; gap: 12px; }
.shelf { height: 56px; flex: none; border: 2px solid #d4d4d4; background: #fafafa; display: flex; align-items: center; }
.shelfname { width: 250px; height: 52px; display: flex; align-items: center; gap: 15px; padding-left: 13px; border-right: 2px solid #d4d4d4; line-height: 36px; }
.shelfname svg { margin-top: -4px; }
.shelfname.rows { padding-left: 12px; gap: 13px; }
.shelf .pill { width: 296px; margin-left: 4px; padding-left: 21px; }
.pill.green { background: #00b180; }
.lower-row { display: flex; gap: 12px; align-items: flex-start; }
.view { width: 1796px; height: 1282px; background: #fff; border: 2px solid #d4d4d4; }
h1 { margin: 0; height: 136px; padding: 26px 0 0 21px; font: 900 56px/70px Lato, sans-serif; color: #499894; word-spacing: 13px; }
.head { font: 600 25px "Open Sans", sans-serif; fill: #333; }
.tick { font: 400 25px "Open Sans", sans-serif; fill: #6b6b6b; }
.axis { font: 500 25px "Open Sans", sans-serif; fill: #333; }
.legend { width: 308px; height: 144px; background: #fff; border: 2px solid #d4d4d4; }
.lhead { height: 58px; background: #fafafa; padding-left: 12px; line-height: 58px; }
.entry { height: 28px; margin: 6px 0 12px 6px; display: flex; gap: 10px; align-items: center; line-height: 28px; }
.entry span { margin-top: 1px; }
.sw { width: 28px; height: 28px; }
.grey { background: #bab0ab; }
.teal { background: #429db7; }

.sheets { height: 62px; flex: none; display: flex; border: solid #c4c4c4; border-width: 2px 0; background: linear-gradient(#e8e8e8, #dfdfdf); color: #555; line-height: 56px; }
.source-tab { width: 260px; display: flex; align-items: center; gap: 9px; padding-left: 20px; }
.sheet { width: 114.200px; border-left: 2px solid #c8c8c8; padding-left: 10px; }
.sheet.current { width: 115px; background: #fafafa; font-weight: 700; padding-left: 12px; }
.newtab { width: 64px; border-left: 2px solid #c8c8c8; display: flex; align-items: center; justify-content: center; }
.newtab:last-child { border-right: 2px solid #c8c8c8; width: 66px; }
.status { height: 40px; flex: none; display: flex; line-height: 38px; color: #111; font-size: 21px; background: linear-gradient(#e0e0e0, #cdcdcd); }
.s1 { width: 131px; padding-left: 24px; }
.s2 { width: 209px; }
.s3 { width: 1780px; }

.dock {
  width: 2811px; height: 70px; margin: 2px 0 0 35px; flex: none; border-radius: 18px; display: flex; padding-left: 5px;
  box-shadow: inset 0 0 0 2px rgba(255, 255, 255, .17), 0 0 0 1px rgba(10, 0, 40, .6);
  background: linear-gradient(90deg, #3a1f7c 0, #33207a 400px, #2c1f72 900px, #35207e 1200px, #44209a 1600px, #5a1fa6 1820px, #671fad 2050px, #5a1eaa 2500px, #4a1e9c 2811px);
}
.app { width: 51.950px; height: 70px; overflow: visible; flex: none; }
.split { width: 2px; height: 50px; margin: 10px 11px 0; background: #8a55c8; flex: none; }
.split.narrow { margin: 10px 10px 0 10px; }
</style>
